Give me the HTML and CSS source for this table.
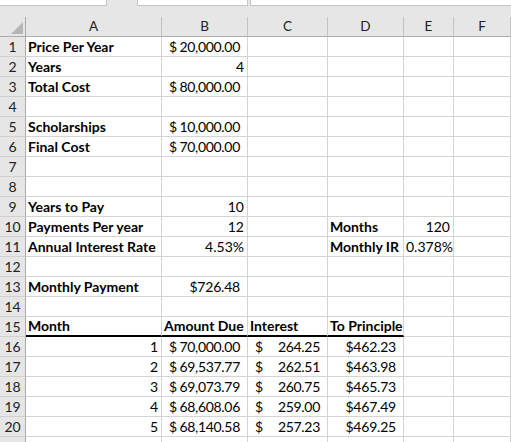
FILE: index.html
```html
<!DOCTYPE html>
<html>
<head>
<meta charset="utf-8">
<link rel="stylesheet" href="styles.css">
</head>
<body>
<div class="topbar">
  <div class="box b1"></div>
  <div class="box b2"></div>
  <div class="box b3"></div>
</div>
<div class="sheet">
  <div class="ch corner"><svg width="12" height="12" viewBox="0 0 12 12"><polygon points="12,0 12,12 0,12" fill="#b5b5b5"/></svg></div>
  <div class="ch">A</div><div class="ch">B</div><div class="ch">C</div><div class="ch">D</div><div class="ch">E</div><div class="ch">F</div>

  <div class="rh">1</div><div class="c b">Price Per Year</div><div class="c acc"><span>$</span><span>20,000.00</span></div><div class="c"></div><div class="c"></div><div class="c"></div><div class="c"></div>
  <div class="rh">2</div><div class="c b">Years</div><div class="c r">4</div><div class="c"></div><div class="c"></div><div class="c"></div><div class="c"></div>
  <div class="rh">3</div><div class="c b">Total Cost</div><div class="c acc"><span>$</span><span>80,000.00</span></div><div class="c"></div><div class="c"></div><div class="c"></div><div class="c"></div>
  <div class="rh">4</div><div class="c"></div><div class="c"></div><div class="c"></div><div class="c"></div><div class="c"></div><div class="c"></div>
  <div class="rh">5</div><div class="c b">Scholarships</div><div class="c acc"><span>$</span><span>10,000.00</span></div><div class="c"></div><div class="c"></div><div class="c"></div><div class="c"></div>
  <div class="rh">6</div><div class="c b">Final Cost</div><div class="c acc"><span>$</span><span>70,000.00</span></div><div class="c"></div><div class="c"></div><div class="c"></div><div class="c"></div>
  <div class="rh">7</div><div class="c"></div><div class="c"></div><div class="c"></div><div class="c"></div><div class="c"></div><div class="c"></div>
  <div class="rh">8</div><div class="c"></div><div class="c"></div><div class="c"></div><div class="c"></div><div class="c"></div><div class="c"></div>
  <div class="rh">9</div><div class="c b">Years to Pay</div><div class="c r">10</div><div class="c"></div><div class="c"></div><div class="c"></div><div class="c"></div>
  <div class="rh">10</div><div class="c b">Payments Per year</div><div class="c r">12</div><div class="c"></div><div class="c b">Months</div><div class="c r">120</div><div class="c"></div>
  <div class="rh">11</div><div class="c b">Annual Interest Rate</div><div class="c r">4.53%</div><div class="c"></div><div class="c b">Monthly IR</div><div class="c r">0.378%</div><div class="c"></div>
  <div class="rh">12</div><div class="c"></div><div class="c"></div><div class="c"></div><div class="c"></div><div class="c"></div><div class="c"></div>
  <div class="rh">13</div><div class="c b">Monthly Payment</div><div class="c cur">$726.48</div><div class="c"></div><div class="c"></div><div class="c"></div><div class="c"></div>
  <div class="rh">14</div><div class="c"></div><div class="c"></div><div class="c"></div><div class="c"></div><div class="c"></div><div class="c"></div>
  <div class="rh">15</div><div class="c b thick">Month</div><div class="c b thick">Amount Due</div><div class="c b thick">Interest</div><div class="c b thick">To Principle</div><div class="c"></div><div class="c"></div>
  <div class="rh">16</div><div class="c r">1</div><div class="c acc"><span>$</span><span>70,000.00</span></div><div class="c acc"><span>$</span><span>264.25</span></div><div class="c cur">$462.23</div><div class="c"></div><div class="c"></div>
  <div class="rh">17</div><div class="c r">2</div><div class="c acc"><span>$</span><span>69,537.77</span></div><div class="c acc"><span>$</span><span>262.51</span></div><div class="c cur">$463.98</div><div class="c"></div><div class="c"></div>
  <div class="rh">18</div><div class="c r">3</div><div class="c acc"><span>$</span><span>69,073.79</span></div><div class="c acc"><span>$</span><span>260.75</span></div><div class="c cur">$465.73</div><div class="c"></div><div class="c"></div>
  <div class="rh">19</div><div class="c r">4</div><div class="c acc"><span>$</span><span>68,608.06</span></div><div class="c acc"><span>$</span><span>259.00</span></div><div class="c cur">$467.49</div><div class="c"></div><div class="c"></div>
  <div class="rh">20</div><div class="c r">5</div><div class="c acc"><span>$</span><span>68,140.58</span></div><div class="c acc"><span>$</span><span>257.23</span></div><div class="c cur">$469.25</div><div class="c"></div><div class="c"></div>
  <div class="rh"></div><div class="c"></div><div class="c"></div><div class="c"></div><div class="c"></div><div class="c"></div><div class="c"></div>
</div>
</body>
</html>
```

FILE: styles.css
```css
html, body {
  margin: 0;
  padding: 0;
  background: #ffffff;
  overflow: hidden;
}
body {
  width: 511px;
  height: 442px;
  font-family: Lato, "Liberation Sans", sans-serif;
  font-size: 14px;
  color: #000;
}
.topbar {
  height: 17px;
  background: #e6e6e6;
  display: flex;
  align-items: flex-start;
}
.box {
  height: 6px;
  box-sizing: border-box;
  background: #fff;
  border-bottom: 1px solid #c6c6c6;
}
.b1 {
  width: 107px;
  border-right: 1px solid #c6c6c6;
}
.b2 {
  width: 111px;
  margin-left: 30px;
  border-left: 1px solid #c6c6c6;
  border-right: 1px solid #c6c6c6;
}
.b3 {
  flex: 1;
  margin-left: 2px;
  border-left: 1px solid #c6c6c6;
}
.sheet {
  display: grid;
  grid-template-columns: 26px 136px 86px 80px 76px 50px 1fr;
  grid-auto-rows: 20px;
}
.ch {
  background: #e6e6e6;
  border-right: 1px solid #c3c3c3;
  border-bottom: 1px solid #ababab;
  box-sizing: border-box;
  text-align: center;
  line-height: 19px;
  color: #222;
  font-size: 13.5px;
}
.corner {
  display: flex;
  justify-content: flex-end;
  align-items: flex-end;
  padding: 0 2px 2px 0;
  border-right-color: #ababab;
}
.rh {
  background: #e6e6e6;
  border-right: 1px solid #ababab;
  border-bottom: 1px solid #d0d0d0;
  box-sizing: border-box;
  text-align: center;
  line-height: 19px;
  color: #222;
  font-size: 14px;
}
.c {
  border-right: 1px solid #d4d4d4;
  border-bottom: 1px solid #d4d4d4;
  box-sizing: border-box;
  padding: 0 3px 0 2px;
  line-height: 19px;
  white-space: nowrap;
}
.b { font-weight: bold; }
.r { text-align: right; }
.acc {
  display: flex;
  justify-content: space-between;
  padding: 0 7px 0 7px;
  letter-spacing: -0.3px;
}
.cur {
  text-align: right;
  padding-right: 7px;
  letter-spacing: -0.2px;
}
.thick {
  border-bottom: 2px solid #000;
  line-height: 18px;
}
```
